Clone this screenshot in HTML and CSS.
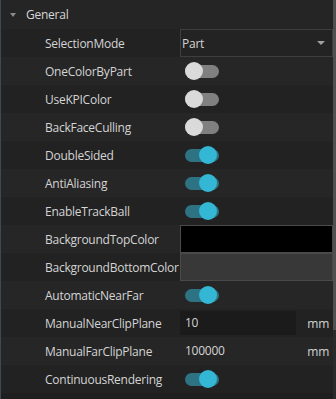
FILE: index.html
```html
<!DOCTYPE html>
<html>
<head>
<meta charset="utf-8">
<link rel="stylesheet" href="styles.css">
</head>
<body>
<div class="panel">
  <div class="content">
    <div class="header">
      <span class="caret"></span>
      <span class="title">General</span>
    </div>
    <div class="row even">
      <div class="label">SelectionMode</div>
      <div class="value"><div class="combo"><span>Part</span><span class="arrow"></span></div></div>
    </div>
    <div class="row odd">
      <div class="label">OneColorByPart</div>
      <div class="value"><div class="toggle"></div></div>
    </div>
    <div class="row even">
      <div class="label">UseKPIColor</div>
      <div class="value"><div class="toggle"></div></div>
    </div>
    <div class="row odd">
      <div class="label">BackFaceCulling</div>
      <div class="value"><div class="toggle"></div></div>
    </div>
    <div class="row even">
      <div class="label">DoubleSided</div>
      <div class="value"><div class="toggle on"></div></div>
    </div>
    <div class="row odd">
      <div class="label">AntiAliasing</div>
      <div class="value"><div class="toggle on"></div></div>
    </div>
    <div class="row even">
      <div class="label">EnableTrackBall</div>
      <div class="value"><div class="toggle on"></div></div>
    </div>
    <div class="row odd">
      <div class="label">BackgroundTopColor</div>
      <div class="value"><div class="swatch black"></div></div>
    </div>
    <div class="row even">
      <div class="label">BackgroundBottomColor</div>
      <div class="value"><div class="swatch grey"></div></div>
    </div>
    <div class="row odd">
      <div class="label">AutomaticNearFar</div>
      <div class="value"><div class="toggle on"></div></div>
    </div>
    <div class="row even">
      <div class="label">ManualNearClipPlane</div>
      <div class="value num"><div class="field focus">10</div><span class="unit">mm</span></div>
    </div>
    <div class="row odd">
      <div class="label">ManualFarClipPlane</div>
      <div class="value num"><div class="field">100000</div><span class="unit">mm</span></div>
    </div>
    <div class="row even">
      <div class="label">ContinuousRendering</div>
      <div class="value"><div class="toggle on"></div></div>
    </div>
  </div>
  <div class="scrollbar"><div class="thumb"></div></div>
</div>
</body>
</html>
```
FILE: styles.css
```css
html, body {
  margin: 0;
  padding: 0;
  background: #1e1e1e;
}
body {
  width: 336px;
  height: 399px;
  overflow: hidden;
  font-family: "Open Sans", "Noto Sans", sans-serif;
  font-size: 12px;
  letter-spacing: -0.25px;
  color: #d4d4d4;
}
.panel {
  display: flex;
  width: 336px;
  height: 399px;
  border-left: 1px solid #3f4853;
  box-sizing: border-box;
  background: #1f1f1f;
}
.content {
  flex: 1;
  display: flex;
  flex-direction: column;
}
.header {
  height: 29px;
  display: flex;
  align-items: center;
  background: #252525;
}
.caret {
  width: 0;
  height: 0;
  margin-left: 9px;
  border-left: 3.5px solid transparent;
  border-right: 3.5px solid transparent;
  border-top: 4px solid #8a8a8a;
}
.title {
  margin-left: 10px;
  color: #d6d6d6;
}
.row {
  height: 28px;
  display: flex;
  align-items: center;
}
.row.even { background: #222222; }
.row.odd { background: #262626; }
.label {
  width: 135px;
  padding-left: 44px;
  white-space: nowrap;
  flex: none;
}
.value {
  flex: 1;
  height: 100%;
  display: flex;
  align-items: center;
}
.combo {
  flex: 1;
  height: 26px;
  border: 1px solid #3e3e3e;
  display: flex;
  align-items: center;
  justify-content: space-between;
  padding-left: 1px;
  padding-right: 7px;
  background: #232323;
}
.arrow {
  width: 0;
  height: 0;
  border-left: 4px solid transparent;
  border-right: 4px solid transparent;
  border-top: 4px solid #a0a0a0;
}
.toggle {
  position: relative;
  width: 34px;
  height: 13px;
  margin-left: 5px;
  border-radius: 7px;
  background: #808080;
}
.toggle::after {
  content: "";
  position: absolute;
  left: 0;
  top: -3px;
  width: 18px;
  height: 18px;
  border-radius: 50%;
  background: #dadada;
}
.toggle.on {
  background: #2e7383;
}
.toggle.on::after {
  left: 14px;
  background: #34b7d4;
}
.swatch {
  flex: 1;
  height: 26px;
  border: 1px solid #4a4a4a;
}
.swatch.black { background: #000000; }
.swatch.grey { background: #383838; }
.num {
  justify-content: space-between;
}
.field {
  width: 111px;
  height: 24px;
  line-height: 24px;
  padding-left: 5px;
}
.field.focus {
  background: #1b1b1b;
}
.unit {
  margin-right: 4px;
}
.scrollbar {
  width: 3px;
  background: #2a2a2a;
  flex: none;
}
.thumb {
  height: 330px;
  background: #505050;
}
```
